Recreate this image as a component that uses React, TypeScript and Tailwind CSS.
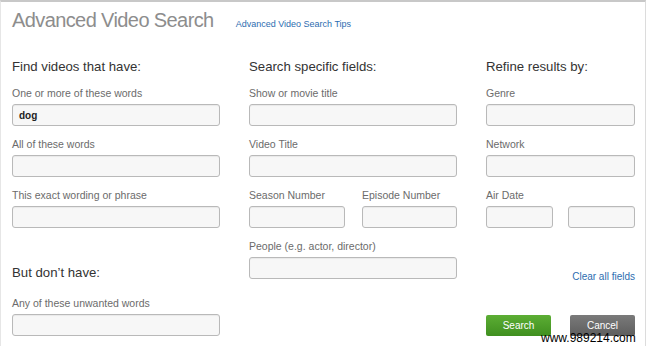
import React from "react";

const Label = ({ children }: { children: React.ReactNode }) => (
  <div className="text-[10.5px] leading-[12px] text-[#6b6b6b] h-[12px] mb-[5px]">{children}</div>
);

const Input = ({ w, value }: { w: string; value?: string }) => (
  <div
    className={`${w} h-[22px] rounded-[3px] border border-[#b9b9b9] bg-[#f7f7f7] shadow-[inset_0_1px_1px_rgba(0,0,0,0.06)] flex items-center px-[6px] text-[10px] font-bold text-[#222]`}
  >
    {value}
  </div>
);

export default function App() {
  return (
    <div
      className="relative w-[646px] h-[346px] bg-white overflow-hidden border-t-2 border-t-[#c8c8c8] border-l border-l-[#e6e6e6] border-r border-r-[#dcdcdc]"
      style={{ fontFamily: '"Liberation Sans", Arial, sans-serif' }}
    >
      <div className="flex items-baseline pl-[11px] pt-[5px]">
        <div className="text-[20px] leading-[26px] tracking-[-0.6px] text-[#8d8d8d]">Advanced Video Search</div>
        <div className="ml-[22px] text-[9px] text-[#2d6db0]">Advanced Video Search Tips</div>
      </div>

      <div className="grid grid-cols-[208px_208px_149px] gap-x-[29px] pl-[11px] mt-[26px]">
        {/* Column 1 */}
        <div className="flex flex-col">
          <div className="text-[13.2px] leading-[16px] text-[#333] mb-[12px]">Find videos that have:</div>
          <Label>One or more of these words</Label>
          <Input w="w-[208px]" value="dog" />
          <div className="h-[12px]" />
          <Label>All of these words</Label>
          <Input w="w-[208px]" />
          <div className="h-[12px]" />
          <Label>This exact wording or phrase</Label>
          <Input w="w-[208px]" />
          <div className="h-[37px]" />
          <div className="text-[13.2px] leading-[16px] text-[#333] mb-[16px]">But don&#8217;t have:</div>
          <Label>Any of these unwanted words</Label>
          <Input w="w-[208px]" />
        </div>

        {/* Column 2 */}
        <div className="flex flex-col">
          <div className="text-[13.2px] leading-[16px] text-[#333] mb-[12px]">Search specific fields:</div>
          <Label>Show or movie title</Label>
          <Input w="w-[208px]" />
          <div className="h-[12px]" />
          <Label>Video Title</Label>
          <Input w="w-[208px]" />
          <div className="h-[12px]" />
          <div className="flex gap-x-[17px]">
            <div>
              <Label>Season Number</Label>
              <Input w="w-[96px]" />
            </div>
            <div>
              <Label>Episode Number</Label>
              <Input w="w-[95px]" />
            </div>
          </div>
          <div className="h-[12px]" />
          <Label>People (e.g. actor, director)</Label>
          <Input w="w-[208px]" />
        </div>

        {/* Column 3 */}
        <div className="flex flex-col">
          <div className="text-[13.2px] leading-[16px] text-[#333] mb-[12px]">Refine results by:</div>
          <Label>Genre</Label>
          <Input w="w-[149px]" />
          <div className="h-[12px]" />
          <Label>Network</Label>
          <Input w="w-[149px]" />
          <div className="h-[12px]" />
          <Label>Air Date</Label>
          <div className="flex gap-x-[15px]">
            <Input w="w-[67px]" />
            <Input w="w-[67px]" />
          </div>
          <div className="mt-[43px] text-right text-[10px] leading-[12px] text-[#2d6db0]">Clear all fields</div>
          <div className="mt-[32px] flex justify-between">
            <div className="w-[65px] h-[21px] rounded-[2px] bg-gradient-to-b from-[#5cae34] to-[#3f8f1f] text-white text-[10px] flex items-center justify-center">Search</div>
            <div className="w-[65px] h-[21px] rounded-[2px] bg-gradient-to-b from-[#7a7a7a] to-[#5e5e5e] text-white text-[10px] flex items-center justify-center">Cancel</div>
          </div>
        </div>
      </div>

      <div className="absolute left-[540px] top-[330px] text-[12px] leading-[13px] text-black">www.989214.com</div>
    </div>
  );
}
